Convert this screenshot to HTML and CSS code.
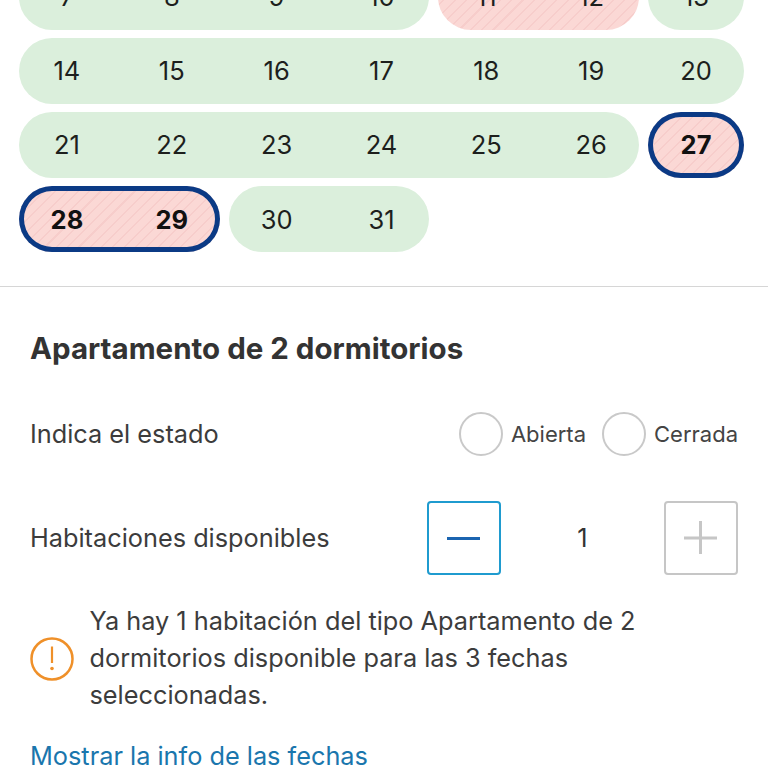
FILE: index.html
```html
<!DOCTYPE html>
<html lang="es">
<head>
<meta charset="utf-8">
<title>Apartamento de 2 dormitorios</title>
<link rel="stylesheet" href="styles.css">
</head>
<body>
<section class="calendar">
  <div class="pill open span-4"><span>7</span><span>8</span><span>9</span><span>10</span></div>
  <div class="pill closed span-2"><span>11</span><span>12</span></div>
  <div class="pill open span-1"><span>13</span></div>
  <div class="pill open span-7"><span>14</span><span>15</span><span>16</span><span>17</span><span>18</span><span>19</span><span>20</span></div>
  <div class="pill open span-6"><span>21</span><span>22</span><span>23</span><span>24</span><span>25</span><span>26</span></div>
  <div class="pill closed selected span-1"><span>27</span></div>
  <div class="pill closed selected span-2"><span>28</span><span>29</span></div>
  <div class="pill open span-2"><span>30</span><span>31</span></div>
</section>
<section class="details">
  <h2 class="title">Apartamento de 2 dormitorios</h2>
  <div class="row status">
    <span class="label">Indica el estado</span>
    <div class="radios">
      <span class="radio"></span><span class="radio-label">Abierta</span>
      <span class="radio second"></span><span class="radio-label last">Cerrada</span>
    </div>
  </div>
  <div class="row rooms">
    <span class="label">Habitaciones disponibles</span>
    <div class="stepper">
      <span class="step active"><svg viewBox="0 0 74 74" width="74" height="74"><path d="M20 37.500H53" stroke="#1b64b0" stroke-width="3"/></svg></span>
      <span class="count">1</span>
      <span class="step"><svg viewBox="0 0 74 74" width="74" height="74"><path d="M20 37H53M36.500 20V53" stroke="#c6c6c6" stroke-width="3"/></svg></span>
    </div>
  </div>
  <div class="notice">
    <svg class="notice-icon" viewBox="0 0 44 44" width="44" height="44"><circle cx="22" cy="22" r="20.500" fill="none" stroke="#ef9029" stroke-width="2.500"/><path d="M22 9.500V26" stroke="#ef9029" stroke-width="2.200"/><circle cx="22" cy="31.500" r="1.800" fill="#ef9029"/></svg>
    <p>Ya hay 1 habitación del tipo Apartamento de 2 dormitorios disponible para las 3 fechas seleccionadas.</p>
  </div>
  <a class="link" href="#">Mostrar la info de las fechas</a>
</section>
</body>
</html>
```
FILE: styles.css
```css
* { box-sizing: border-box; }
html, body {
  margin: 0;
  height: 768px;
  overflow: hidden;
  background: #fff;
  font-family: Inter, "Liberation Sans", sans-serif;
  color: #333;
}
.calendar {
  display: grid;
  grid-template-columns: repeat(7, 1fr);
  column-gap: 9px;
  row-gap: 8.200px;
  grid-auto-rows: 66px;
  width: 725px;
  margin: -36.400px 0 0 19px;
  padding-bottom: 34px;
}
.pill {
  display: grid;
  grid-auto-flow: column;
  grid-auto-columns: 1fr;
  column-gap: 9px;
  align-items: center;
  justify-items: center;
  border-radius: 33px;
  font-size: 25.500px;
  color: #1d1f1d;
}
.open { background: #dbefdc; }
.closed {
  background: repeating-linear-gradient(-45deg, #fbd8d5 0, #fbd8d5 6.500px, #f7cdcb 6.500px, #f7cdcb 8px);
}
.selected {
  box-shadow: inset 0 0 0 5px #0b3a85;
  font-weight: 700;
  color: #111;
}
.span-1 { grid-column: span 1; }
.span-2 { grid-column: span 2; }
.span-4 { grid-column: span 4; }
.span-6 { grid-column: span 6; }
.span-7 { grid-column: span 7; }
.details {
  border-top: 1px solid #d6d6d6;
  padding: 41px 30px 0;
}
.title {
  margin: 0;
  font-size: 29.500px;
  line-height: 40px;
  font-weight: 700;
  color: #333;
}
.row {
  display: flex;
  align-items: center;
  justify-content: space-between;
}
.label { margin: -1px 0 1px; font-size: 25.300px; color: #3c3c3c; }
.status { margin-top: 44px; height: 44px; }
.radios { display: flex; align-items: center; }
.radio {
  width: 44px;
  height: 44px;
  border: 2px solid #c9c9c9;
  border-radius: 50%;
}
.second { margin-left: 16px; }
.radio-label { margin-left: 8px; font-size: 22px; color: #444; }
.last { margin-right: 0; }
.rooms { margin-top: 45px; height: 74px; }
.stepper { display: flex; align-items: center; }
.step {
  display: block;
  width: 74px;
  height: 74px;
  border: 2px solid #c6c6c6;
  border-radius: 4px;
}
.step svg { display: block; margin: -2px; }
.step.active { border-color: #1f9bcf; }
.count { width: 163px; margin: -1px 0 1px; text-align: center; font-size: 25.300px; color: #333; }
.notice {
  display: flex;
  align-items: center;
  gap: 15.500px;
  margin-top: 28px;
}
.notice-icon { flex: none; }
.notice p {
  margin: -1px 0 1px;
  font-size: 25.300px;
  line-height: 37px;
  color: #3c3c3c;
}
.link {
  display: block;
  margin-top: 23px;
  font-size: 25.300px;
  line-height: 37px;
  color: #1a76ad;
  text-decoration: none;
}
```
